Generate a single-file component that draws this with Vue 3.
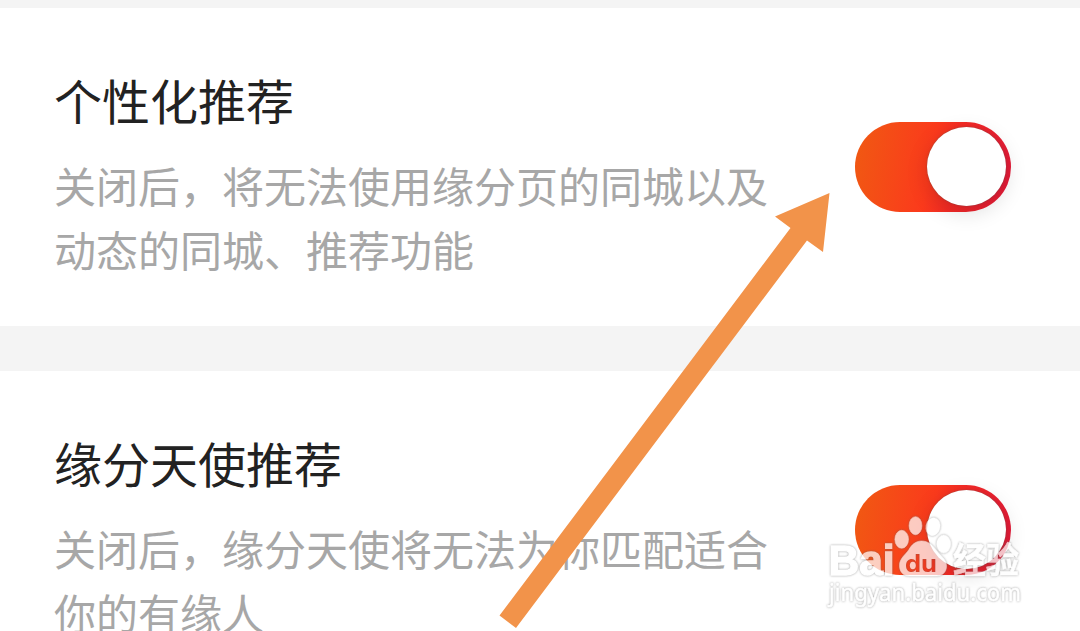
<template>
  <div class="settings-page">
    <section v-for="item in items" :key="item.title" class="setting-row">
      <div class="setting-text">
        <h2>{{ item.title }}</h2>
        <p>
          <span v-for="line in item.lines" :key="line">{{ line }}</span>
        </p>
      </div>
      <button
        type="button"
        role="switch"
        class="switch"
        :class="{ on: item.enabled }"
        :aria-checked="item.enabled"
        :aria-label="item.title"
        @click="item.enabled = !item.enabled"
      >
        <span class="knob"></span>
      </button>
    </section>

    <svg class="overlay" viewBox="0 0 1080 631">
      <polygon class="arrow" points="829.5,193 823,252 807,240.5 516,628 499.5,615.5 790.5,228 775,216.5" />

      <defs>
        <mask id="paw-mask" maskUnits="userSpaceOnUse" x="820" y="500" width="210" height="120">
          <rect x="820" y="500" width="210" height="120" fill="white" />
          <text class="du" x="905" y="571.5" textLength="32" lengthAdjust="spacingAndGlyphs">du</text>
        </mask>
      </defs>
      <g class="watermark">
        <text class="brand" x="828.5" y="574.5" textLength="66" lengthAdjust="spacingAndGlyphs">Bai</text>
        <g mask="url(#paw-mask)">
          <ellipse cx="901.7" cy="539.3" rx="6.8" ry="9" />
          <ellipse cx="915.5" cy="525.7" rx="6.4" ry="9" />
          <ellipse cx="933" cy="526.7" rx="7" ry="9" transform="rotate(12 933 526.7)" />
          <ellipse cx="943.7" cy="544" rx="7" ry="9" />
          <path d="M921.5 541c-6 0-10 4-12.5 8.5-3 5-9.5 8.500-9.500 16 0 6.500 4 10.500 10 10.500h26.500c6.500 0 10.500-4 10.500-10 0-7-6.500-10.500-10-15.500-3.500-5-8-9.500-15-9.500z" />
        </g>
        <text class="brand-cn" x="953" y="573" textLength="66" lengthAdjust="spacingAndGlyphs">经验</text>
        <text class="site" x="829" y="601" textLength="192" lengthAdjust="spacingAndGlyphs">jingyan.baidu.com</text>
      </g>
    </svg>
  </div>
</template>

<script setup>
import { reactive } from 'vue'

const items = reactive([
  {
    title: '个性化推荐',
    lines: ['关闭后，将无法使用缘分页的同城以及', '动态的同城、推荐功能'],
    enabled: true
  },
  {
    title: '缘分天使推荐',
    lines: ['关闭后，缘分天使将无法为你匹配适合', '你的有缘人'],
    enabled: true
  }
])
</script>

<style>
body {
  margin: 0;
  background: #f4f4f4;
}
</style>

<style scoped>
.settings-page {
  position: relative;
  height: 631px;
  padding-top: 8px;
  box-sizing: border-box;
  overflow: hidden;
  background: #f4f4f4;
  font-family: "Noto Sans CJK SC", "Noto Sans", sans-serif;
}

.setting-row {
  display: flex;
  justify-content: space-between;
  align-items: center;
  height: 318px;
  margin-bottom: 45px;
  padding: 0 69px 0 54px;
  box-sizing: border-box;
  background: #fff;
}

.setting-text {
  height: 208px;
}

.setting-text h2 {
  margin: 0 0 18px;
  font-size: 48px;
  font-weight: 400;
  line-height: 72px;
  color: #222;
}

.setting-text p {
  margin: 0;
  font-size: 42px;
  line-height: 64px;
  color: #a7a7a7;
}

.setting-text p span {
  display: block;
  white-space: nowrap;
}

.switch {
  display: flex;
  align-items: center;
  width: 156px;
  height: 90px;
  margin: 0;
  padding: 0 5px 1px;
  border: none;
  border-radius: 45px;
  background: #ddd;
  cursor: pointer;
}

.switch.on {
  justify-content: flex-end;
  background: linear-gradient(100deg, #f05a12 0%, #fb3a1c 48%, #f32a25 64%, #e0183a 100%);
}

.knob {
  width: 79px;
  height: 79px;
  margin-right: 0.5px;
  border-radius: 50%;
  background: #fff;
  box-shadow: 0 6px 22px rgba(0, 0, 0, 0.14), 0 0 2px rgba(90, 90, 90, 0.6);
}

.overlay {
  position: absolute;
  top: 0;
  left: 0;
  width: 1080px;
  height: 631px;
  pointer-events: none;
}

.arrow {
  fill: #f2934a;
}

.watermark {
  fill: #fff;
  stroke: #fff;
  stroke-width: 0.6;
  opacity: 0.73;
  filter: drop-shadow(0 0 0.8px rgba(100, 100, 100, 0.8));
}

.brand {
  font-family: "Liberation Sans", Arial, sans-serif;
  font-size: 42px;
  font-weight: 700;
  stroke-width: 1.4;
}

.du {
  font-family: Inter, sans-serif;
  font-size: 24px;
  font-weight: 700;
  fill: black;
  stroke: none;
}

.brand-cn {
  font-size: 35px;
  font-weight: 700;
}

.site {
  font-family: "Noto Sans", sans-serif;
  font-size: 24px;
}
</style>
